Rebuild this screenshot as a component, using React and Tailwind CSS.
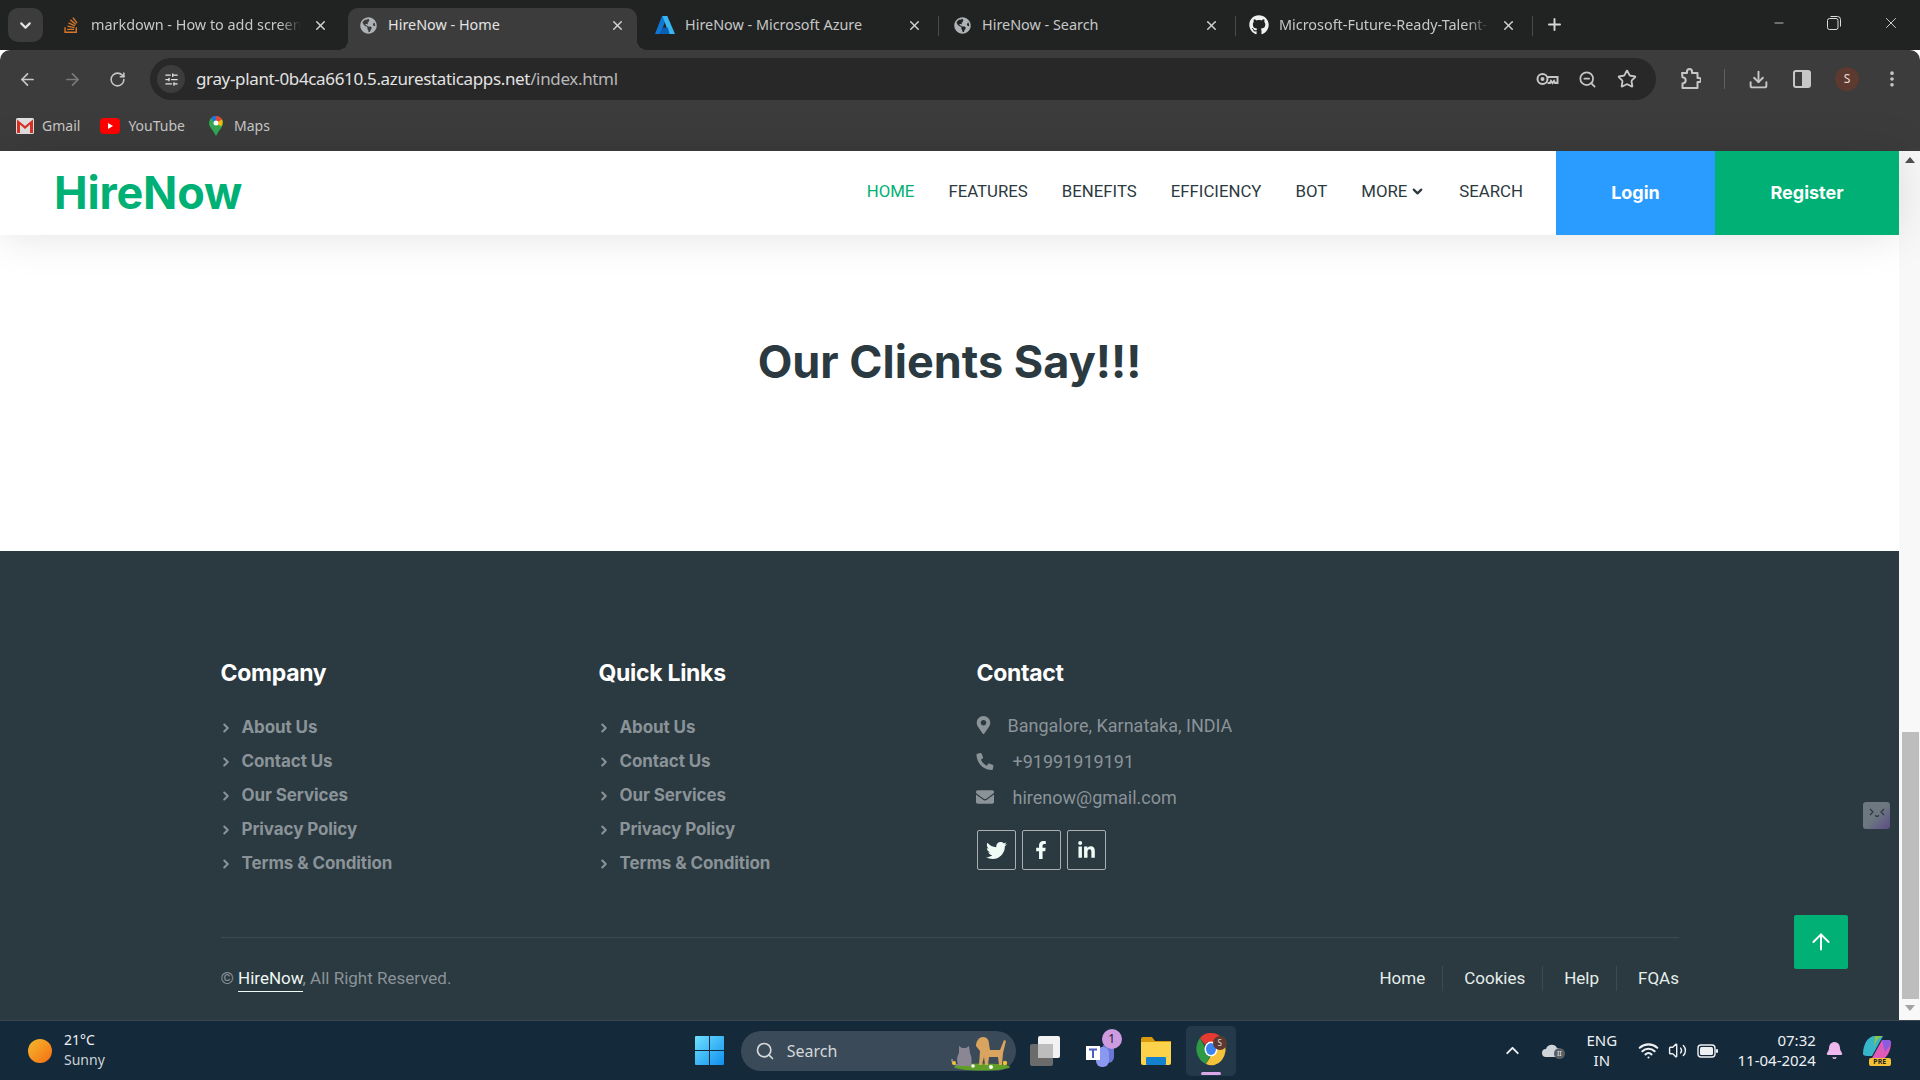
import React from "react";
import { FaTwitter, FaFacebookF, FaLinkedinIn, FaMapMarkerAlt, FaPhoneAlt, FaEnvelope, FaGithub, FaStackOverflow, FaGlobeAmericas } from "react-icons/fa";
import { ArrowLeft, ArrowRight, RotateCw, X, Plus, SlidersHorizontal, ZoomOut, Star, Download, EllipsisVertical, Search, ChevronDown, ChevronRight, ChevronUp, Minus, ArrowUp, Wifi, Volume2, Bell } from "lucide-react";

const ui = "font-['Noto_Sans','Open_Sans',sans-serif]";

function AzureIcon() {
  return (
    <svg width="20" height="18" viewBox="0 0 20 18">
      <path d="M7 0h5L5.5 18H0z" fill="#1276d3" />
      <path d="M7.5 0h4.800L20 18h-6z" fill="#38b6f2" />
      <path d="M8 11.500l5 .2 1.500 6.300H4z" fill="#0a5fb4" />
    </svg>
  );
}

function Tab({ icon, title, active, fade, sep }) {
  return (
    <div className={`relative mr-[8px] flex h-[42px] w-[289px] shrink-0 items-center pb-[8px] pl-[10px] pr-[12px] ${active ? "rounded-t-[10px] bg-[#3c3c3c]" : ""}`}>
      {active && <span className="absolute bottom-0 left-[-10px] h-[10px] w-[10px] bg-[radial-gradient(circle_at_0_0,transparent_10px,#3c3c3c_10px)]" />}
      {active && <span className="absolute bottom-0 right-[-10px] h-[10px] w-[10px] bg-[radial-gradient(circle_at_100%_0,transparent_10px,#3c3c3c_10px)]" />}
      <span className="flex w-[20px] shrink-0 justify-center">{icon}</span>
      <span className={`ml-[10px] w-[210px] overflow-hidden whitespace-nowrap text-[14.400px] ${active ? "text-[#e3e3e3]" : "text-[#c7c7c7]"} ${fade ? "[mask-image:linear-gradient(90deg,#000_90%,transparent_100%)]" : ""}`}>{title}</span>
      <X size={15} strokeWidth={2.400} className="ml-auto text-[#d0d0d0]" />
      {sep && <span className="absolute right-[-5px] top-[8px] h-[20px] w-[1px] bg-[#4a4c4c]" />}
    </div>
  );
}

function Bookmarks() {
  return (
    <div className={`flex h-[51px] items-center bg-[#3c3c3c] pl-[16px] text-[14px] text-[#c7c7c7] ${ui}`}>
      <svg width="18" height="16" viewBox="0 0 18 16"><rect x="0" y="0" width="18" height="16" rx="1.500" fill="#e0e0e0" /><path d="M1 1.500l8 6.500 8-6.500V15h-3V6.500L9 11 4 6.500V15H1z" fill="#d93025" /></svg>
      <span className="ml-[8px]">Gmail</span>
      <svg className="ml-[20px]" width="20" height="16" viewBox="0 0 20 16"><rect width="20" height="16" rx="4" fill="#f00" /><path d="M8 5l5 3-5 3z" fill="#fff" /></svg>
      <span className="ml-[8px]">YouTube</span>
      <svg className="ml-[24px]" width="14" height="20" viewBox="0 0 14 20"><path d="M7 0a7 7 0 0 1 7 7c0 4-4 7-7 13C4 14 0 11 0 7a7 7 0 0 1 7-7z" fill="#34a853" /><path d="M2 2.200A7 7 0 0 1 7 0v7z" fill="#1a73e8" /><path d="M7 0a7 7 0 0 1 6 3.500L7 7z" fill="#ea4335" /><path d="M13 3.500A7 7 0 0 1 12 10.500L7 7z" fill="#fbbc04" /><circle cx="7" cy="7" r="2.500" fill="#fff" /></svg>
      <span className="ml-[11px]">Maps</span>
    </div>
  );
}

function Chrome() {
  return (
    <div className={ui}>
      <div className="flex h-[50px] items-end bg-[#202322]">
        <div className="mb-[8px] ml-[8px] mr-[8px] flex h-[34px] w-[35px] shrink-0 items-center justify-center rounded-[10px] bg-[#3c3c3c]">
          <ChevronDown size={17} strokeWidth={3} className="text-[#e3e3e3]" />
        </div>
        <Tab icon={<FaStackOverflow size={18} className="text-[#d6762a]" />} title="markdown - How to add screen" fade />
        <Tab active icon={<FaGlobeAmericas size={17} className="text-[#aeb1b5]" />} title="HireNow - Home" />
        <Tab icon={<AzureIcon />} title="HireNow - Microsoft Azure" sep />
        <Tab icon={<FaGlobeAmericas size={17} className="text-[#aeb1b5]" />} title="HireNow - Search" sep />
        <Tab icon={<FaGithub size={20} className="text-[#f1f1f1]" />} title="Microsoft-Future-Ready-Talent-" fade sep />
        <Plus size={19} strokeWidth={2.400} className="mb-[16px] ml-[9px] text-[#d8d8d8]" />
        <div className="mb-[18px] ml-auto flex items-center gap-[41px] pr-[20px] text-[#dcdcdc]">
          <Minus size={14} strokeWidth={1.400} />
          <svg width="14" height="14" viewBox="0 0 14 14" fill="none" stroke="currentColor" strokeWidth="1"><rect x="0.500" y="2.500" width="10.500" height="11" rx="2" /><path d="M3.500.500h7a3 3 0 0 1 3 3v7" /></svg>
          <X size={18} strokeWidth={1.200} />
        </div>
      </div>
      <div className="flex h-[50px] items-center rounded-t-[10px] bg-[#3c3c3c] pt-[8px] text-[#c7c7c7]">
        <ArrowLeft size={19} strokeWidth={2.200} className="ml-[18px]" />
        <ArrowRight size={19} strokeWidth={2.200} className="ml-[26px] text-[#7a7a7a]" />
        <RotateCw size={17} strokeWidth={2.200} className="ml-[27px]" />
        <div className="ml-[24px] flex h-[42px] w-[1506px] items-center rounded-full bg-[#282828]">
          <span className="ml-[7px] flex h-[28px] w-[28px] items-center justify-center rounded-full bg-[#3c3c3c]"><SlidersHorizontal size={15} strokeWidth={2} className="text-[#e3e3e3]" /></span>
          <span className="ml-[11px] text-[17px] tracking-[-0.35px] text-[#e3e3e3]">gray-plant-0b4ca6610.5.azurestaticapps.net<span className="text-[#b8b8b8]">/index.html</span></span>
          <svg className="ml-auto" width="23" height="14" viewBox="0 0 23 14" fill="none" stroke="currentColor" strokeWidth="2"><circle cx="6.500" cy="7" r="5" /><circle cx="6.500" cy="7" r="1" fill="currentColor" /><path d="M11.500 5h10v6h-2.500l-1-2-1.500 2-1.500-2-1 2h-2.500" /></svg>
          <ZoomOut size={19} strokeWidth={2.200} className="ml-[19px]" />
          <Star size={20} strokeWidth={2.200} className="ml-[20px] mr-[19px]" />
        </div>
        <svg className="ml-[24px]" width="21" height="22" viewBox="0 0 21 22" fill="none" stroke="currentColor" strokeWidth="2" strokeLinejoin="round"><path d="M2 5h5V3.500a2.500 2.500 0 0 1 5 0V5h5.500v5H19a2 2 0 0 1 0 4h-1.500v6H2.500v-4.500c2-.2 3.200-1.500 3.200-3.200S4.500 9.500 2.500 9.300z" /></svg>
        <span className="ml-[23px] h-[20px] w-[1px] bg-[#606060]" />
        <Download size={21} strokeWidth={2.200} className="ml-[23px]" />
        <svg className="ml-[24px]" width="18" height="18" viewBox="0 0 18 18"><rect x="1" y="1" width="16" height="16" rx="2" fill="none" stroke="currentColor" strokeWidth="2" /><rect x="9" y="1" width="8" height="16" fill="currentColor" /></svg>
        <span className="ml-[24px] flex h-[24px] w-[24px] items-center justify-center rounded-full bg-[#5d3a30] text-[12px] text-[#e8dcd8]">S</span>
        <EllipsisVertical size={20} strokeWidth={2.400} className="ml-[23px]" />
      </div>
      <Bookmarks />
    </div>
  );
}

const navItems = ["FEATURES", "BENEFITS", "EFFICIENCY", "BOT"];

function Nav() {
  return (
    <header className="relative z-10 flex h-[84px] shrink-0 items-stretch bg-white shadow-[0_0_45px_rgba(0,0,0,0.12)]">
      <a className="ml-[54px] flex items-center pb-[1px] font-['Inter',sans-serif] text-[45px] font-bold leading-none tracking-[-0.2px] text-[#00b074]">HireNow</a>
      <nav className="ml-auto flex items-center gap-[34px] pb-[3px] font-['Roboto',sans-serif] text-[16.800px] text-[#2b3940]">
        <a className="text-[#00b074]">HOME</a>
        {navItems.map((n) => <a key={n}>{n}</a>)}
        <a className="flex items-center gap-[3px]">MORE <ChevronDown size={15} strokeWidth={3.500} /></a>
        <a>SEARCH</a>
      </nav>
      <a className="ml-[33px] flex w-[159px] items-center justify-center bg-[#2a9bff] pb-[2px] font-['Inter',sans-serif] text-[18px] font-bold text-white">Login</a>
      <a className="flex w-[184px] items-center justify-center bg-[#00b074] pb-[2px] font-['Inter',sans-serif] text-[18px] font-bold text-white">Register</a>
    </header>
  );
}

const links = ["About Us", "Contact Us", "Our Services", "Privacy Policy", "Terms & Condition"];

function LinkColumn({ title }) {
  return (
    <div className="w-[378px] shrink-0">
      <h5 className="font-['Inter',sans-serif] text-[23px] font-bold leading-[28px] tracking-[-0.3px] text-white">{title}</h5>
      <ul className="mt-[29px] flex flex-col gap-[10px]">
        {links.map((l) => (
          <li key={l} className="flex h-[24px] items-center font-['Inter',sans-serif] text-[17px] font-bold tracking-[-0.1px] text-[#8a9398]">
            <ChevronRight size={14} strokeWidth={3.500} className="ml-[-2px] mr-[9px] w-[14px] shrink-0" />
            {l}
          </li>
        ))}
      </ul>
    </div>
  );
}

function Social({ children }) {
  return <a className="flex h-[40px] w-[39px] items-center justify-center rounded-[2px] border border-[#a9afb3] text-[#f0fbf6]">{children}</a>;
}

function Footer() {
  return (
    <footer className="flex flex-1 flex-col bg-[#2b3940] pl-[220.500px] pr-[220px] pt-[108px] font-['Roboto',sans-serif]">
      <div className="flex h-[278px] shrink-0">
        <LinkColumn title="Company" />
        <LinkColumn title="Quick Links" />
        <div className="flex-1">
          <h5 className="font-['Inter',sans-serif] text-[23px] font-bold leading-[28px] tracking-[-0.3px] text-white">Contact</h5>
          <div className="mt-[26px] flex h-[24px] items-center text-[18px] text-[#8a9398]"><FaMapMarkerAlt size={18} className="ml-[-1px] mr-[17px] w-[15px]" />Bangalore, Karnataka, INDIA</div>
          <div className="mt-[12px] flex h-[24px] items-center text-[18px] text-[#8a9398]"><FaPhoneAlt size={17} className="ml-[-1px] mr-[19px] w-[18px]" />+91991919191</div>
          <div className="mt-[12px] flex h-[24px] items-center text-[18px] text-[#8a9398]"><FaEnvelope size={18} className="ml-[-1px] mr-[19px] w-[18px]" />hirenow@gmail.com</div>
          <div className="mt-[21px] flex gap-[6px]">
            <Social><FaTwitter size={21} /></Social>
            <Social><FaFacebookF size={18} /></Social>
            <Social><FaLinkedinIn size={19} /></Social>
          </div>
        </div>
      </div>
      <div className="flex items-center justify-between border-t border-[#3c4a52] pt-[28px] text-[17px]">
        <p className="text-[#8a9398]">© <a className="border-b border-[#f0fbf6] pb-[3px] text-[#eef7f3]">HireNow</a>, All Right Reserved.</p>
        <div className="flex items-center text-[#e4eeea]">
          <a className="border-r border-[#3c4a52] pr-[17px] leading-[25px]">Home</a>
          <a className="border-r border-[#3c4a52] pl-[21px] pr-[17px] leading-[25px]">Cookies</a>
          <a className="border-r border-[#3c4a52] pl-[21px] pr-[17px] leading-[25px]">Help</a>
          <a className="pl-[21px] leading-[25px]">FQAs</a>
        </div>
      </div>
    </footer>
  );
}

function Scrollbar() {
  return (
    <div className="flex w-[21px] shrink-0 flex-col items-center bg-[#f8f8f8] pl-[1px]">
      <span className="mt-[6px] h-0 w-0 border-x-[5px] border-b-[6px] border-x-transparent border-b-[#505050]" />
      <div className="mt-[569px] h-[267px] w-[17px] bg-[#bdbdbd]" />
      <span className="mt-[6px] h-0 w-0 border-x-[5px] border-t-[6px] border-x-transparent border-t-[#a3a3a3]" />
    </div>
  );
}

function TaskSearch() {
  return (
    <div className="relative ml-[17px] flex h-[40px] w-[275px] items-center rounded-full bg-[#3a4a58] text-[#d5d8da]">
      <Search size={20} strokeWidth={2} className="ml-[14px]" />
      <span className="ml-[12px] text-[16px]">Search</span>
      <svg className="absolute right-[4px] top-[3px]" width="62" height="37" viewBox="0 0 62 37">
        <ellipse cx="32" cy="33" rx="28" ry="3.500" fill="#5f9f27" />
        <path d="M9 32c-3-4-2-10 0-13l0-7 3 2h4l3-2 1 7c2 4 2 9 1 13z" fill="#8a8694" />
        <path d="M8 31c-4 0-6-1-6-6" fill="none" stroke="#8a8694" strokeWidth="1.800" />
        <path d="M29 31l1-14-4-5c0-5 3-9 7-9 4 0 6 3 6 7l1 6h10l4-10 2 1-3 12-1 12h-3l-1-8h-9l-1 8h-3l-1-8-2 8z" fill="#d9a45f" />
        <circle cx="23" cy="32" r="1.800" fill="#fff" />
        <circle cx="41" cy="33" r="2" fill="#fff" />
        <circle cx="55" cy="29" r="2.200" fill="#f1c232" />
        <circle cx="4" cy="29" r="2" fill="#f1c232" />
      </svg>
    </div>
  );
}

function Taskbar() {
  return (
    <div className={`flex h-[60px] shrink-0 items-center border-t border-[#3a4750] bg-[#14293a] ${ui} text-[#eef1f3]`}>
      <span className="ml-[28px] h-[24px] w-[24px] rounded-full bg-gradient-to-br from-[#f2b92e] to-[#f56a10]" />
      <div className="ml-[12px] pb-[1px] text-[14px] leading-[20px]">
        <div>21°C</div>
        <div className="text-[#ccd2d6]">Sunny</div>
      </div>
      <svg className="ml-[590px]" width="29" height="29" viewBox="0 0 29 29">
        <defs><linearGradient id="win" x1="0" y1="0" x2="1" y2="1"><stop offset="0" stopColor="#6fe0ff" /><stop offset="1" stopColor="#0f8fee" /></linearGradient></defs>
        <path d="M1 0h13v14H0V1a1 1 0 0 1 1-1zM15 0h13a1 1 0 0 1 1 1v13H15zM0 15h14v14H1a1 1 0 0 1-1-1zM15 15h14v13a1 1 0 0 1-1 1H15z" fill="url(#win)" />
      </svg>
      <TaskSearch />
      <svg className="ml-[14px]" width="30" height="30" viewBox="0 0 30 30"><rect x="0" y="8" width="23" height="22" rx="2" fill="#6b6b6b" /><rect x="8" y="0" width="22" height="22" rx="2" fill="#f2f2f2" /><rect x="8" y="8" width="15" height="14" fill="#bdbdbd" /></svg>
      <div className="relative ml-[26px] h-[32px] w-[32px]">
        <svg className="absolute left-0 top-[4px]" width="30" height="28" viewBox="0 0 30 28"><rect x="16" y="4" width="12" height="20" rx="6" fill="#6b77d8" /><rect x="10" y="8" width="13" height="20" rx="6" fill="#8b98f0" /><rect x="0" y="7" width="14" height="14" fill="#fff" /><path d="M3 9.500h8v2H8v7.500H6v-7.500H3z" fill="#4f5bc4" /></svg>
        <span className="absolute right-[-4px] top-[-6px] flex h-[20px] w-[20px] items-center justify-center rounded-full bg-[#cf9be0] text-[12px] text-[#1c1c1c]">1</span>
      </div>
      <svg className="ml-[23px]" width="30" height="28" viewBox="0 0 30 28"><path d="M0 2a2 2 0 0 1 2-2h9l3 4h16v6H0z" fill="#d99a0b" /><path d="M0 5h30v21a2 2 0 0 1-2 2H2a2 2 0 0 1-2-2z" fill="#fbd24a" /><rect x="5" y="20" width="20" height="8" rx="1" fill="#1480d0" /></svg>
      <div className="relative ml-[15px] flex h-[50px] w-[50px] items-center justify-center rounded-[5px] bg-[#24394a]">
        <svg className="mb-[4px]" width="30" height="34" viewBox="0 0 30 34">
          <path d="M15 1a14 16 0 0 1 13 9H15a6 7 0 0 0-6 3L4 6a14 16 0 0 1 11-5z" fill="#e53a2f" />
          <path d="M4 6l6 11a6 7 0 0 0 5 5l-5 10A14 16 0 0 1 4 6z" fill="#2f9a45" />
          <path d="M28 10a14 16 0 0 1-18 22l6-10a6 7 0 0 0 4-11z" fill="#f5c33b" />
          <ellipse cx="15" cy="17" rx="6.500" ry="7.500" fill="#fff" />
          <ellipse cx="15" cy="17" rx="5" ry="6" fill="#3c82f0" />
        </svg>
        <span className="absolute right-[9px] top-[10px] flex h-[14px] w-[14px] items-center justify-center rounded-full bg-[#5d3a30] text-[8px] text-[#e8dcd8]">S</span>
        <span className="absolute bottom-[1px] left-[15px] h-[3px] w-[20px] rounded-full bg-[#d9a8e8]" />
      </div>
      <ChevronUp size={21} strokeWidth={2.200} className="ml-[266px]" />
      <div className="relative ml-[19px] h-[16px] w-[20px]">
        <svg width="20" height="14" viewBox="0 0 20 14"><path d="M4 14a4 4 0 0 1 0-8 6 6 0 0 1 11-1 4.500 4.500 0 0 1 1 9z" fill="#cfd4d8" /></svg>
        <span className="absolute right-[-3px] top-[5px] flex h-[11px] w-[11px] items-center justify-center rounded-full bg-[#5a5f63] text-[7px] leading-none">II</span>
      </div>
      <div className="ml-[21px] w-[38px] pb-[1px] text-center text-[15px] leading-[20px]">
        <div>ENG</div>
        <div>IN</div>
      </div>
      <Wifi size={21} strokeWidth={2.400} className="ml-[17px]" />
      <Volume2 size={19} strokeWidth={1.800} className="ml-[9px]" />
      <svg className="ml-[10px]" width="21" height="14" viewBox="0 0 21 14" fill="none"><rect x="1" y="1" width="17" height="12" rx="3" stroke="currentColor" strokeWidth="1.400" /><rect x="3" y="3" width="13" height="8" rx="1.500" fill="currentColor" /><rect x="19" y="5" width="2" height="4" rx="1" fill="currentColor" /></svg>
      <div className="ml-[17px] w-[81px] pb-[1px] text-right text-[15px] leading-[20px]">
        <div>07:32</div>
        <div>11-04-2024</div>
      </div>
      <Bell size={19} fill="#efb9ee" strokeWidth={1.500} className="ml-[9px] text-[#efb9ee]" />
      <div className="relative ml-[18px] h-[30px] w-[30px]">
        <svg width="30" height="24" viewBox="0 0 30 24"><path d="M1 18C1 8 6 0 13 0h8L10 20H5c-2 0-4-1-4-2z" fill="#37b5c9" /><path d="M13 0h8c-6 2-8 8-9 12z" fill="#8ac44a" /><path d="M29 6c0 10-5 18-12 18H9L20 4h5c2 0 4 1 4 2z" fill="#e05ab8" /><path d="M20 4h8l1 4-6 8z" fill="#8b5ce0" /></svg>
        <span className="absolute bottom-0 left-[7px] h-[8px] w-[22px] rounded-[2px] bg-[#f5c033] text-center text-[7px] font-bold leading-[8px] text-[#222]">PRE</span>
      </div>
    </div>
  );
}

export default function App() {
  return (
    <div className="relative flex h-[1080px] w-[1920px] flex-col overflow-hidden bg-white">
      <Chrome />
      <div className="relative flex min-h-0 flex-1">
        <div className="flex min-w-0 flex-1 flex-col">
          <Nav />
          <section className="flex h-[316px] shrink-0 items-start justify-center pt-[99px]">
            <h1 className="font-['Inter',sans-serif] text-[45px] font-bold leading-[55px] text-[#2b3940]">Our Clients Say!!!</h1>
          </section>
          <Footer />
        </div>
        <Scrollbar />
        <div className="absolute left-[1863px] top-[651px] flex h-[27px] w-[27px] items-start justify-center rounded-[3px] bg-gradient-to-br from-[#6e7880] via-[#6c7780] to-[#5d4a86] pt-[6px]">
          <svg width="16" height="10" viewBox="0 0 16 10" fill="none" stroke="#2b3940" strokeWidth="1.300"><path d="M1 1l3 3-3 3M15 1l-3 3 3 3M6.500 7a1.500 1.500 0 0 0 3 0" /></svg>
        </div>
        <a className="absolute left-[1794px] top-[764px] flex h-[54px] w-[54px] items-center justify-center rounded-[2px] bg-[#00b074] text-white"><ArrowUp size={26} strokeWidth={1.800} /></a>
      </div>
      <Taskbar />
    </div>
  );
}
